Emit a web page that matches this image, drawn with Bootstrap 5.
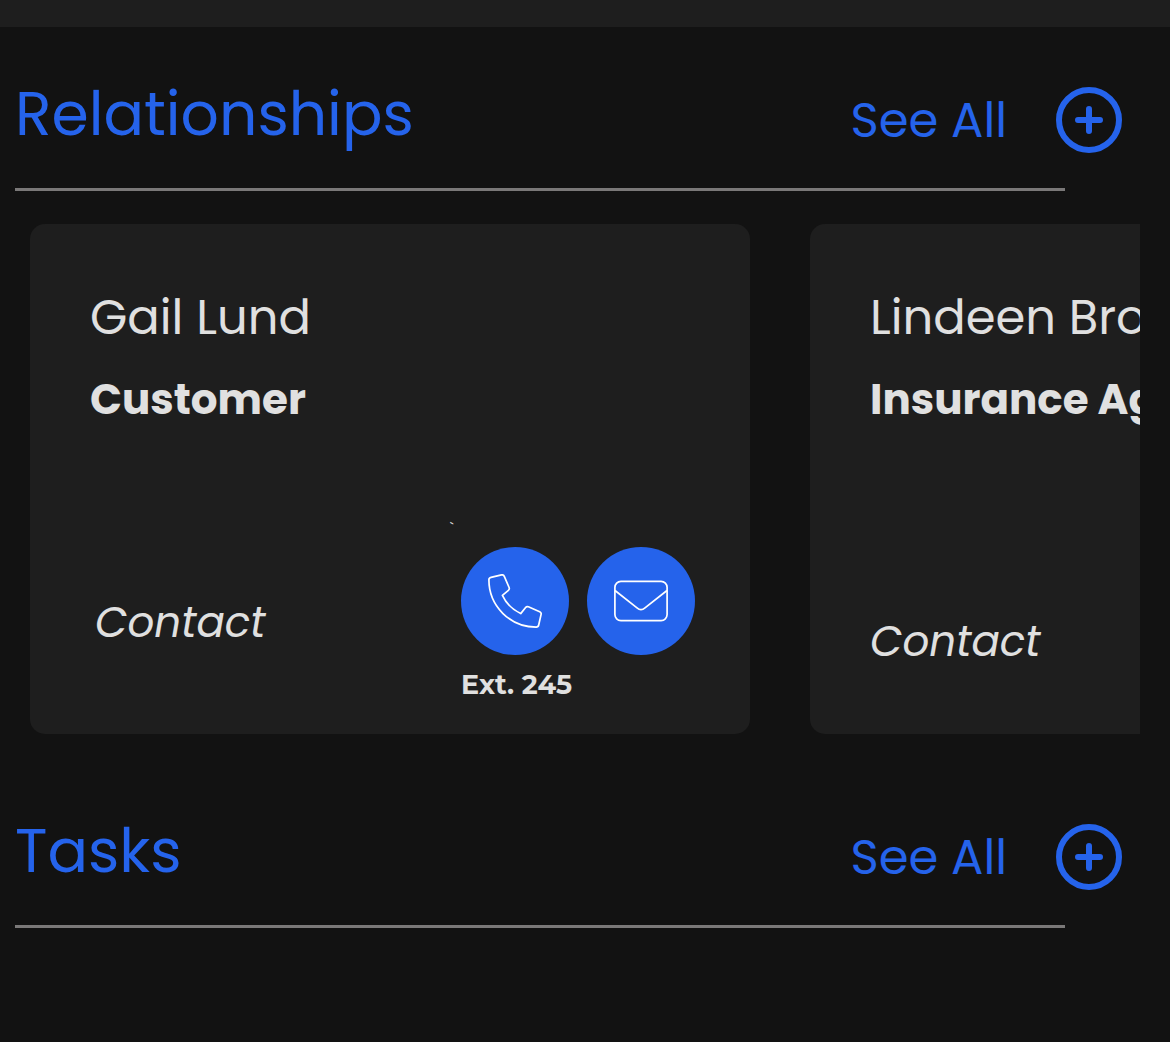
<!DOCTYPE html>
<html lang="en" data-bs-theme="dark">
<head>
<meta charset="utf-8">
<meta name="viewport" content="width=device-width, initial-scale=1">
<title>Relationships</title>
<link href="https://cdn.jsdelivr.net/npm/bootstrap@5.3.0/dist/css/bootstrap.min.css" rel="stylesheet">
<style>
  body { background: #121212; color: #e0e0e0; font-family: Poppins, Inter, sans-serif; }
  .top-strip { height: 27px; background: #1e1e1e; }
  .section-head { padding: 52px 48px 31px 15px; }
  .section-title { font-size: 60px; line-height: 70px; font-weight: 400; color: #2563eb; }
  .see-all { font-size: 48px; line-height: 72px; padding-top: 2px; color: #2563eb; text-decoration: none; }
  .head-actions { gap: 49px; padding-top: 4px; }
  .add-btn { width: 66px; height: 66px; color: #2563eb; }
  .section-rule { height: 3px; margin: 0 105px 33px 15px; background: #7a7878; opacity: 1; border: 0; }
  .card-strip { gap: 60px; margin: 0 30px; padding-bottom: 30px; }
  .person-card { flex: 0 0 720px; height: 510px; padding: 60px; background: #1e1e1e; border: 0; border-radius: 15px; color: #e0e0e0; }
  .person-name { font-size: 48px; line-height: 68px; font-weight: 400; color: #e0e0e0; }
  .person-role { font-size: 42px; line-height: 60px; margin-top: 18px; font-weight: 700; }
  .contact-label { font-size: 42px; line-height: 64px; font-style: italic; }
  .contact-row { padding-left: 5px; margin-right: -5px; margin-bottom: -29px; }
  .contact-row .contact-label { margin-bottom: 48px; }
  .round-btn { width: 108px; height: 108px; background: #2563eb; color: #fff; }
  .round-gap { gap: 18px; }
  .ext-text { font-family: Montserrat, Inter, sans-serif; font-size: 27px; line-height: 36px; font-weight: 700; margin-top: 12px; }
  .stray-tick { font-size: 14px; line-height: 20px; margin: 0 0 9px -11px; }
</style>
</head>
<body>
<div class="top-strip"></div>
<main class="overflow-hidden">
  <section>
    <div class="section-head d-flex justify-content-between">
      <h2 class="section-title m-0">Relationships</h2>
      <div class="head-actions d-flex align-items-center">
        <a class="see-all" href="#">See All</a>
        <button type="button" class="add-btn btn border-0 p-0 d-flex" aria-label="Add relationship">
          <svg width="66" height="66" viewBox="0 0 66 66" fill="none" stroke="currentColor" stroke-width="6" stroke-linecap="round"><circle cx="33" cy="33" r="30"/><path d="M33 22v22M22 33h22"/></svg>
        </button>
      </div>
    </div>
    <hr class="section-rule">
    <div class="card-strip d-flex overflow-hidden">
      <article class="person-card card">
        <h3 class="person-name m-0">Gail Lund</h3>
        <div class="person-role">Customer</div>
        <div class="contact-row d-flex justify-content-between align-items-end mt-auto">
          <span class="contact-label">Contact</span>
          <div>
            <div class="stray-tick">`</div>
            <div class="round-gap d-flex">
              <button type="button" class="round-btn btn rounded-circle border-0 p-0 d-flex align-items-center justify-content-center" aria-label="Call">
                <svg width="54" height="54" viewBox="0 0 54 54" fill="none" stroke="currentColor" stroke-width="1.7" stroke-linejoin="round"><path d="M3 3.3 13.5.9Q15.5.5 16.3 2.3L21.1 13.5Q21.8 15.2 20.4 16.3L14.4 21.3Q20 33.5 32.7 39.6L37.6 33.5Q38.7 32.1 40.4 32.8L51.7 37.7Q53.5 38.5 53.1 40.4L50.7 51Q50.3 53.1 48.2 53.1C22 53.1.9 32 .9 5.8Q.9 3.8 3 3.3Z"/></svg>
              </button>
              <button type="button" class="round-btn btn rounded-circle border-0 p-0 d-flex align-items-center justify-content-center" aria-label="Email">
                <svg width="54" height="54" viewBox="0 0 54 54" fill="none" stroke="currentColor" stroke-width="1.7"><rect x=".9" y="7.3" width="52.2" height="39.3" rx="6"/><path d="M1 16.5 23 33.8Q27 37.5 31 33.8L53 16.5"/></svg>
              </button>
            </div>
            <div class="ext-text">Ext. 245</div>
          </div>
        </div>
      </article>
      <article class="person-card card">
        <h3 class="person-name m-0">Lindeen Brown</h3>
        <div class="person-role">Insurance Agent</div>
        <div class="contact-label mt-auto">Contact</div>
      </article>
    </div>
  </section>
  <section>
    <div class="section-head d-flex justify-content-between">
      <h2 class="section-title m-0">Tasks</h2>
      <div class="head-actions d-flex align-items-center">
        <a class="see-all" href="#">See All</a>
        <button type="button" class="add-btn btn border-0 p-0 d-flex" aria-label="Add task">
          <svg width="66" height="66" viewBox="0 0 66 66" fill="none" stroke="currentColor" stroke-width="6" stroke-linecap="round"><circle cx="33" cy="33" r="30"/><path d="M33 22v22M22 33h22"/></svg>
        </button>
      </div>
    </div>
    <hr class="section-rule">
  </section>
</main>
<script src="https://cdn.jsdelivr.net/npm/bootstrap@5.3.0/dist/js/bootstrap.bundle.min.js"></script>
</body>
</html>
